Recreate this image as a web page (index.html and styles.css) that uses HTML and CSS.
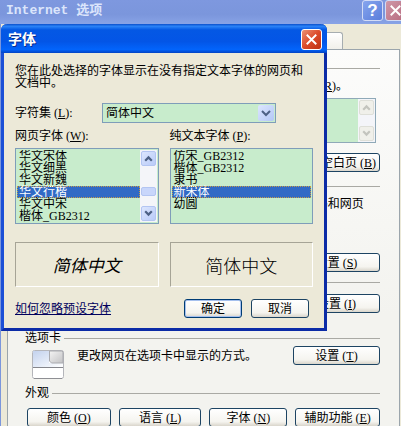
FILE: index.html
```html
<!DOCTYPE html>
<html lang="zh-CN">
<head>
    <meta charset="UTF-8">
    <meta name="viewport" content="width=device-width, initial-scale=1.0">
    <title>Internet 选项</title>
    <link rel="stylesheet" href="styles.css">
</head>
<body>

<div class="window">
    <header class="window-title">
        <h1>Internet 选项</h1>
        <button type="button" class="caption-button help" aria-label="帮助">?</button>
        <button type="button" class="caption-button" aria-label="关闭">
            <svg viewBox="0 0 20 20"><path d="M5 5l10 10M15 5L5 15"/></svg>
        </button>
    </header>

    <main class="window-body">
        <div class="tab"></div>
        <div class="panel">
            <section class="group home">
                <h2>主页</h2>
                <label class="indent" for="homePages">若要创建主页选项卡，请在各地址行键入地址<span class="key">(<u>R</u>)</span>。</label>
                <div class="address-box">
                    <textarea id="homePages"></textarea>
                    <div class="scrollbar disabled">
                        <button type="button" aria-label="向上" disabled><svg viewBox="0 0 10 10"><path d="M2 7l3-3 3 3"/></svg></button>
                        <button type="button" aria-label="向下" disabled><svg viewBox="0 0 10 10"><path d="M2 3l3 3 3-3"/></svg></button>
                    </div>
                </div>
                <div class="actions">
                    <button type="button" class="button">使用空白页<span class="key">(<u>B</u>)</span></button>
                </div>
            </section>

            <section class="group history">
                <h2>浏览历史记录</h2>
                <p class="indent">删除临时文件、历史记录、Cookie、保存的密码和网页</p>
                <div class="actions">
                    <button type="button" class="button">设置<span class="key">(<u>S</u>)</span></button>
                </div>
            </section>

            <section class="group search">
                <h2>搜索</h2>
                <div class="actions">
                    <button type="button" class="button">设置<span class="key">(<u>I</u>)</span></button>
                </div>
            </section>

            <section class="group tabs">
                <h2>选项卡</h2>
                <div class="tabs-row">
                    <svg class="tabs-icon" viewBox="0 0 32 30">
                        <defs>
                            <linearGradient id="tabBlue" x1="0" y1="0" x2="1" y2="1">
                                <stop offset="0" stop-color="#c3d2ee"/>
                                <stop offset="1" stop-color="#ffffff"/>
                            </linearGradient>
                            <linearGradient id="tabGray" x1="0" y1="0" x2="1" y2="1">
                                <stop offset="0" stop-color="#f4f4f4"/>
                                <stop offset="1" stop-color="#c2c2c4"/>
                            </linearGradient>
                        </defs>
                        <rect x="0.500" y="0.500" width="31" height="28" rx="2" fill="#fff" stroke="#b4b5ba"/>
                        <path d="M1 1h16v12h14v4H1z" fill="url(#tabBlue)"/>
                        <path d="M17.500 1v10l2 2H31V2l-1-1z" fill="url(#tabGray)" stroke="#aaabb0"/>
                        <path d="M1 17.500h30" stroke="#85868c"/>
                        <path d="M2 28.500h28" stroke="#8e8f94"/>
                    </svg>
                    <p>更改网页在选项卡中显示的方式。</p>
                    <button type="button" class="button">设置<span class="key">(<u>T</u>)</span></button>
                </div>
            </section>

            <section class="group look">
                <h2>外观</h2>
                <div class="look-row">
                    <button type="button" class="button">颜色<span class="key">(<u>O</u>)</span></button>
                    <button type="button" class="button">语言<span class="key">(<u>L</u>)</span></button>
                    <button type="button" class="button">字体<span class="key">(<u>N</u>)</span></button>
                    <button type="button" class="button">辅助功能<span class="key">(<u>E</u>)</span></button>
                </div>
            </section>
        </div>
    </main>
</div>

<div class="dialog" role="dialog" aria-labelledby="dialogTitle">
    <header class="dialog-title">
        <h2 id="dialogTitle">字体</h2>
        <button type="button" class="caption-button" aria-label="关闭">
            <svg viewBox="0 0 20 20"><path d="M5 5l10 10M15 5L5 15"/></svg>
        </button>
    </header>

    <form class="dialog-body">
        <p>您在此处选择的字体显示在没有指定文本字体的网页和文档中。</p>

        <div class="charset">
            <label for="charset">字符集<span class="key">(<u>L</u>):</span></label>
            <div class="combo">
                <select id="charset">
                    <option>简体中文</option>
                </select>
                <svg class="combo-arrow" viewBox="0 0 16 16"><path d="M4 6l4 4 4-4"/></svg>
            </div>
        </div>

        <div class="columns">
            <div class="column">
                <label for="webFont">网页字体<span class="key">(<u>W</u>):</span></label>
                <div class="list">
                    <select id="webFont" size="6">
                        <option>华文宋体</option>
                        <option>华文细黑</option>
                        <option>华文新魏</option>
                        <option selected>华文行楷</option>
                        <option>华文中宋</option>
                        <option>楷体_GB2312</option>
                    </select>
                    <div class="scrollbar">
                        <button type="button" aria-label="向上"><svg viewBox="0 0 10 10"><path d="M2 7l3-3 3 3"/></svg></button>
                        <span class="thumb"></span>
                        <button type="button" aria-label="向下"><svg viewBox="0 0 10 10"><path d="M2 3l3 3 3-3"/></svg></button>
                    </div>
                </div>
                <div class="sample brush">简体中文</div>
            </div>
            <div class="column">
                <label for="textFont">纯文本字体<span class="key">(<u>P</u>):</span></label>
                <div class="list">
                    <select id="textFont" size="6">
                        <option>仿宋_GB2312</option>
                        <option>楷体_GB2312</option>
                        <option>隶书</option>
                        <option selected>新宋体</option>
                        <option>幼圆</option>
                    </select>
                </div>
                <div class="sample">简体中文</div>
            </div>
        </div>

        <footer class="dialog-footer">
            <a href="#">如何忽略预设字体</a>
            <button type="button" class="button default">确定</button>
            <button type="button" class="button">取消</button>
        </footer>
    </form>
</div>

</body>
</html>
```
FILE: styles.css
```css
* {
    box-sizing: border-box;
}
body {
    margin: 0;
    height: 100vh;
    overflow: hidden;
    background: #ece9d8;
    color: #000;
    font-family: "Liberation Serif", "Noto Sans CJK SC", sans-serif;
    font-size: 12px;
    line-height: 12px;
}
h1, h2, p {
    margin: 0;
    font-size: 12px;
}
button, select, textarea {
    font: inherit;
    color: inherit;
    margin: 0;
}
label {
    display: block;
    white-space: nowrap;
}
.key {
    margin-left: 3px;
}

/* Buttons */
.button {
    height: 19px;
    padding: 0;
    border: 1px solid #1d4463;
    border-radius: 3px;
    background: linear-gradient(#ffffff, #f5f4ef 75%, #d9d5cb);
    white-space: nowrap;
}
.button.default {
    border-color: #003c74;
    box-shadow: inset 0 0 0 1px #a5c0ee;
}
.caption-button {
    flex: none;
    width: 21px;
    height: 21px;
    padding: 0;
    border: 1px solid #fff;
    border-radius: 3px;
    background: linear-gradient(135deg, #eb9275, #dc4b2a 50%, #bd3011);
}
.caption-button svg {
    display: block;
    width: 100%;
    height: 100%;
    fill: none;
    stroke: #fff;
    stroke-width: 2;
}

/* Options window */
.window-title {
    display: flex;
    gap: 2px;
    height: 24px;
    padding-left: 6px;
    margin-right: -5px;
    background: linear-gradient(#7e98df, #7b96dc 60%, #88a3e6);
}
.window-title h1 {
    flex: 1;
    color: #dbe5fb;
    font-family: "Liberation Mono", "Noto Sans CJK SC", monospace;
    font-size: 13px;
    line-height: 21px;
}
.window-title .caption-button {
    border-color: #d3dcf6;
    background: linear-gradient(135deg, #cf98a8, #b86b80);
}
.window-title .help {
    background: linear-gradient(135deg, #86a5ee, #5a7ddb);
    color: #fff;
    font-family: "Liberation Sans", sans-serif;
    font-size: 17px;
    font-weight: bold;
}
.window-body {
    padding: 8px 1px 0 6px;
    border-left: 1px solid #7b96dc;
}
.tab {
    width: 336px;
    height: 17px;
    border: 1px solid #a6adb0;
    border-bottom: 0;
    border-radius: 3px 3px 0 0;
    background: linear-gradient(#ffffff, #f1f0ea);
}
.panel {
    padding: 12px 19px 0 17px;
    border: 1px solid #9ba5ac;
    border-bottom: 0;
    background: linear-gradient(#fcfcfb, #f3f3ef 70%);
}
.group h2 {
    display: flex;
    align-items: center;
    gap: 3px;
    font-weight: normal;
}
.group h2::after {
    content: "";
    flex: 1;
    height: 1px;
    background: #a9a9a4;
}
.group .indent {
    margin: 6px 0 0 52px;
    white-space: nowrap;
}
.actions {
    display: flex;
    justify-content: flex-end;
}
.actions .button {
    width: 87px;
}
.address-box {
    display: flex;
    height: 45px;
    margin: 6px 4px 10px 52px;
    border: 1px solid #8fa9b8;
    background: #c8eccc;
}
.address-box textarea {
    flex: 1;
    border: 0;
    padding: 2px;
    background: none;
    resize: none;
}
.home {
    padding-bottom: 8px;
}
.history .indent {
    margin-bottom: 43px;
}
.history {
    padding-bottom: 4px;
}
.search .actions {
    margin: 6px 0 19px;
}
.tabs-row {
    display: flex;
    align-items: flex-start;
    margin: 2px 0 7px 7px;
}
.tabs-icon {
    width: 32px;
    height: 30px;
    margin-top: 4px;
    fill: none;
}
.tabs-row p {
    flex: 1;
    margin: 4px 0 0 13px;
    white-space: nowrap;
}
.tabs-row .button {
    width: 87px;
}
.look-row {
    display: grid;
    grid-template-columns: 84fr 83fr 78fr 85fr;
    gap: 8px;
    margin: 9px 0 0 2px;
}

/* Scrollbars */
.scrollbar {
    display: flex;
    flex-direction: column;
    justify-content: space-between;
    width: 17px;
    padding: 1px;
    background: #f4f5f9;
}
.scrollbar button {
    height: 15px;
    padding: 0;
    border: 1px solid #b3c5f2;
    border-radius: 2px;
    background: linear-gradient(135deg, #dce6fe, #b9cbf8);
}
.scrollbar svg {
    display: block;
    width: 11px;
    height: 11px;
    margin: 0 auto;
    fill: none;
    stroke: #4d6185;
    stroke-width: 2;
}
.scrollbar .thumb {
    height: 9px;
    margin-top: 11px;
    border: 1px solid #b3c5f2;
    border-radius: 2px;
    background: #c8d6fb;
}
.scrollbar.disabled button {
    border-color: #dedfd8;
    background: #f0f0ea;
}
.scrollbar.disabled svg {
    stroke: #c3c4be;
}

/* Font dialog, floats over the options window */
.dialog {
    position: absolute;
    top: 24px;
    left: 1px;
    width: 326px;
    border: 3px solid #0b2ba6;
    border-left-color: #1b4fd6;
    border-top: 0;
    border-radius: 6px 6px 0 0;
    background: #ece9d8;
}
.dialog-title {
    display: flex;
    align-items: center;
    height: 29px;
    margin: 0 -3px;
    padding: 2px 5px 0 7px;
    border-radius: 6px 6px 0 0;
    background: linear-gradient(#0a4fcb, #2b83f7 8%, #0458e4 20%, #0355e6 60%, #0264fb 88%, #0344c4);
}
.dialog-title h2 {
    flex: 1;
    color: #fff;
    font-size: 14px;
    text-shadow: 1px 1px #0a2f90;
}
.dialog-body {
    padding: 12px 11px 10px;
}
.charset {
    display: flex;
    align-items: center;
    margin: 14px 37px 7px 0;
}
.charset label {
    width: 87px;
}
.combo {
    position: relative;
    flex: 1;
}
.combo select {
    appearance: none;
    display: block;
    width: 100%;
    height: 20px;
    padding: 0 20px 0 3px;
    border: 1px solid #7f9db9;
    border-radius: 0;
    background: #c8eccc;
}
.combo-arrow {
    position: absolute;
    top: 2px;
    right: 2px;
    width: 16px;
    height: 16px;
    border-radius: 2px;
    background: linear-gradient(135deg, #dce6fe, #b3c7f6);
    fill: none;
    stroke: #4d6185;
    stroke-width: 2;
    pointer-events: none;
}
.columns {
    display: grid;
    grid-template-columns: 1fr 1fr;
    gap: 11px;
}
.list {
    display: flex;
    height: 76px;
    margin: 6px 0 18px;
    padding: 1px;
    border: 1px solid #7f9db9;
    background: #c8eccc;
}
.list select {
    flex: 1;
    min-width: 0;
    padding: 0;
    border: 0;
    border-radius: 0;
    outline: 0;
    background: none;
    overflow: hidden;
}
.list option {
    display: flex;
    align-items: center;
    height: 12px;
    min-height: 0;
    padding: 0 2px 2px;
    line-height: 12px;
    overflow: visible;
}
.list option:checked {
    background: #316ac5 linear-gradient(#316ac5, #316ac5);
    color: #fff;
    outline: 1px dotted #c39a4c;
    outline-offset: -1px;
}
.sample {
    display: flex;
    align-items: center;
    justify-content: center;
    height: 45px;
    border: 1px solid;
    border-color: #a6a496 #fff #fff #a6a496;
    font-family: "Noto Sans CJK SC", sans-serif;
    font-size: 18px;
    font-weight: 300;
}
.sample.brush {
    font-size: 17px;
    font-style: italic;
    font-weight: 400;
}
.dialog-footer {
    display: flex;
    align-items: center;
    gap: 9px;
    margin-top: 12px;
    padding-right: 4px;
}
.dialog-footer a {
    margin-right: auto;
    color: #00005c;
}
.dialog-footer .button {
    width: 58px;
}
```
